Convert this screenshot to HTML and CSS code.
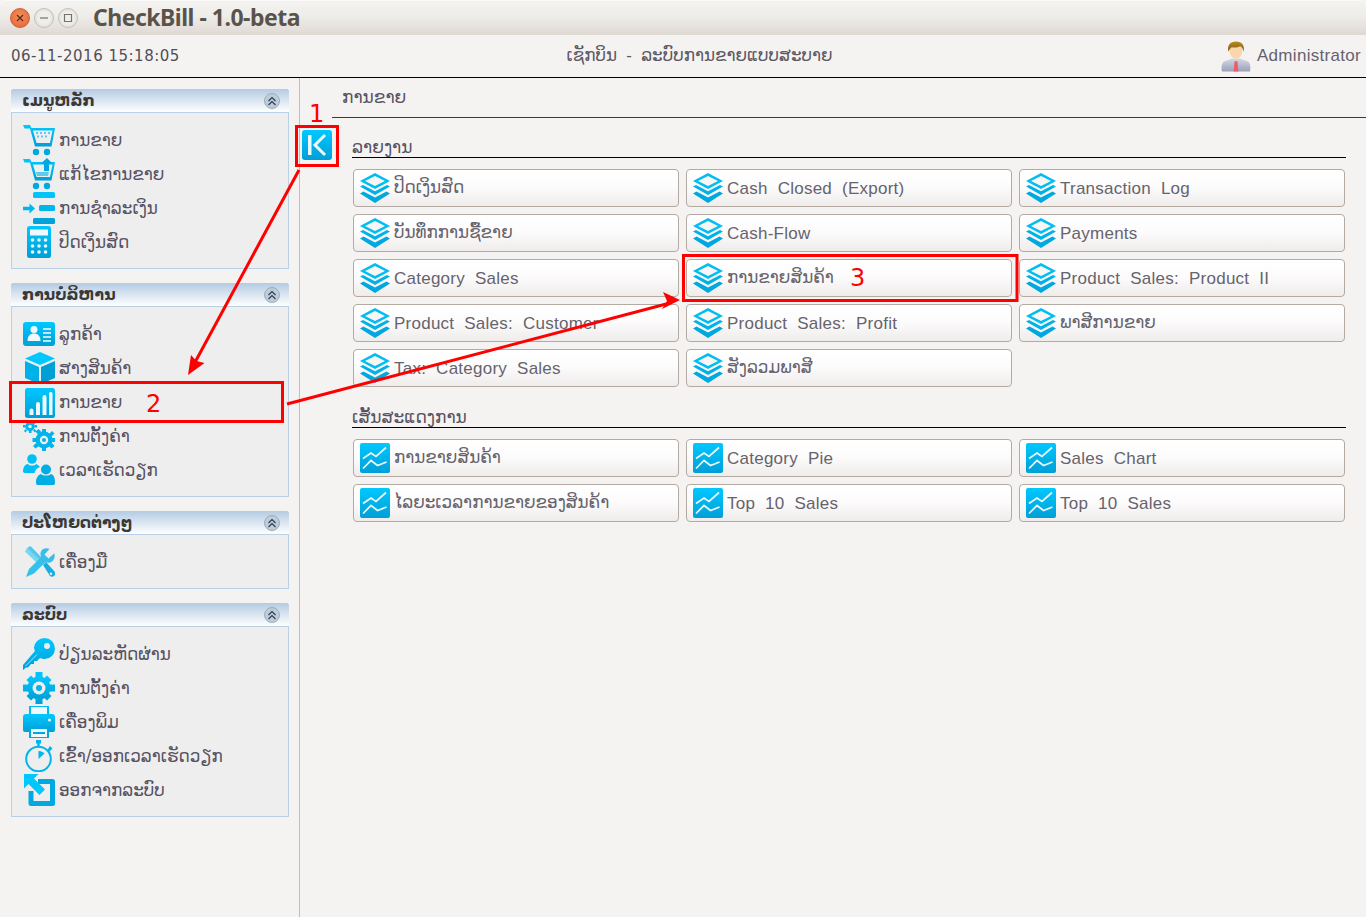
FILE: index.html
```html
<!DOCTYPE html>
<html lang="lo">
<head>
<meta charset="utf-8">
<title>CheckBill - 1.0-beta</title>
<link rel="stylesheet" href="styles.css">
</head>
<body>
<svg class="defs" width="0" height="0" aria-hidden="true">
  <defs>
    <linearGradient id="g" x1="0" y1="0" x2="0" y2="1"><stop offset="0" stop-color="#00c8ff"/><stop offset="1" stop-color="#009fd6"/></linearGradient>
    <linearGradient id="suit" x1="0" y1="0" x2="0" y2="1"><stop offset="0" stop-color="#d5d9e6"/><stop offset="1" stop-color="#9aa1ba"/></linearGradient>
    <linearGradient id="hair" x1="0" y1="0" x2="0" y2="1"><stop offset="0" stop-color="#b98a1e"/><stop offset="1" stop-color="#7d5a14"/></linearGradient>
    <symbol id="i-chev" viewBox="0 0 16 16">
      <circle cx="8" cy="8" r="7.500" fill="#b8cde0" stroke="#a9a9a9"/>
      <path d="M4.500 8L8 4.500 11.500 8M4.500 12L8 8.500 11.500 12" fill="none" stroke="#33363c" stroke-width="1.100"/>
    </symbol>
    <symbol id="i-cart" viewBox="0 0 32 32">
      <path d="M0 1h7l1.500 3h23.500l-3.500 18.500H12L7 4.500H1.500z" fill="url(#g)"/>
      <path d="M10 6.500h19.500l-2.500 12.500H13.500z" fill="#eeeeee"/>
      <path d="M13 8h2v2h-2zm4 0h2v2h-2zm4 0h2v2h-2zm4 0h2v2h-2zM14 11.500h2v2h-2zm4 0h2v2h-2zm4 0h2v2h-2z" fill="#5ecbee"/>
      <circle cx="13" cy="28" r="3.200" fill="#00a8e0"/><circle cx="24" cy="28" r="3.200" fill="#00a8e0"/>
    </symbol>
    <symbol id="i-cartedit" viewBox="0 0 32 32">
      <path d="M0 1h7l1.500 3h23.500l-3.500 18.500H12L7 4.500H1.500z" fill="url(#g)"/>
      <path d="M10 6.500h19.500l-2.500 12.500H13.500z" fill="#eeeeee"/>
      <path d="M13 14h13l-1 4H14z" fill="#5ecbee"/>
      <path d="M24 0l5.500 5.500H26V13h-5V5.500h-3z" fill="#00a8e0"/>
      <circle cx="13" cy="28" r="3.200" fill="#00a8e0"/><circle cx="24" cy="28" r="3.200" fill="#00a8e0"/>
    </symbol>
    <symbol id="i-pay" viewBox="0 0 32 32">
      <rect x="10" y="0" width="22" height="6" rx="1.500" fill="#00c4fa"/>
      <rect x="16" y="13" width="16" height="6" rx="1.500" fill="#00b6ec"/>
      <rect x="10" y="26" width="22" height="6" rx="1.500" fill="#00a2d8"/>
      <path d="M0 14.800h6.500v-3.300l5.500 5-5.500 5v-3.300H0z" fill="#00b6ec"/>
    </symbol>
    <symbol id="i-calc" viewBox="0 0 32 32">
      <rect x="4" y="0" width="24" height="32" rx="2.500" fill="url(#g)"/>
      <rect x="7" y="3.500" width="18" height="6" fill="#eef9fd"/>
      <g fill="#eef9fd"><circle cx="9.500" cy="14" r="1.800"/><circle cx="16" cy="14" r="1.800"/><circle cx="22.500" cy="14" r="1.800"/><circle cx="9.500" cy="20" r="1.800"/><circle cx="16" cy="20" r="1.800"/><circle cx="22.500" cy="20" r="1.800"/><circle cx="9.500" cy="26" r="1.800"/><circle cx="16" cy="26" r="1.800"/><circle cx="22.500" cy="26" r="1.800"/></g>
    </symbol>
    <symbol id="i-card" viewBox="0 0 32 32">
      <rect x="0" y="4" width="32" height="24" rx="3" fill="url(#g)"/>
      <circle cx="11" cy="11.500" r="3.500" fill="#eef9fd"/>
      <path d="M4.500 23c0-5 2.500-7.500 6.500-7.500s6.500 2.500 6.500 7.500z" fill="#eef9fd"/>
      <path d="M20 10h8v2h-8zm0 4h8v2h-8zm0 4h8v2h-8zm0 4h8v2h-8z" fill="#bdeafa"/>
    </symbol>
    <symbol id="i-box" viewBox="0 0 32 32">
      <path d="M17 0l15 6.500-15 6.500L2 6.500z" fill="#00c8ff"/>
      <path d="M2 9l14 6v17L2 26z" fill="#00b0e8"/>
      <path d="M32 9l-14 6v17l14-6z" fill="#009fd6"/>
    </symbol>
    <symbol id="i-chart" viewBox="0 0 32 32">
      <rect x="2" y="2" width="30" height="30" rx="2.500" fill="url(#g)"/>
      <path d="M6.500 24.500a2 2 0 0 1 4 0V29h-4zM13 18a2 2 0 0 1 4 0v11h-4zM19.500 11a2 2 0 0 1 4 0v18h-4zM26 7.500a1.800 1.800 0 0 1 3.500 0V29H26z" fill="#eef9fd"/>
    </symbol>
    <symbol id="i-gears" viewBox="0 0 32 32">
      <g fill="#00b4ec">
        <circle cx="21" cy="20" r="8.500"/>
        <path d="M19 9h4v4h-4zM19 27h4v4h-4zM9.500 18h4v4h-4zM28.500 18h3.500v4h-3.500z"/>
        <path d="M12.500 11.500l3-2.500 3 3-3 3zM26 26l3-3 2.500 3-3 2.500zM12.500 28.500l-2.500-2.500 3-3 3 3zM26 14l3-3 2.500 2.500-3 3z"/>
        <circle cx="7" cy="6.500" r="4.700"/>
        <path d="M6 0h2.500v2.500H6zM6 10.500h2.500V13H6zM0 5h2.500v2.500H0zM11.500 5H14v2.500h-2.500zM1.500 1l2-1 1.500 2-1.500 1.500zM10 10.500l1.500-1.500 2 2-1.500 1.500zM1 11l1.500-2 1.500 1.500-1.500 2zM9.500 2.500L11.500 1l1.500 1.500L11 4.500z"/>
      </g>
      <circle cx="21" cy="20" r="4.200" fill="#eeeeee"/>
      <circle cx="21" cy="20" r="2" fill="#00b4ec"/>
      <circle cx="7" cy="6.500" r="1.800" fill="#eeeeee"/>
    </symbol>
    <symbol id="i-users" viewBox="0 0 32 32">
      <circle cx="9" cy="5" r="4.800" fill="#00bff5"/>
      <path d="M0 18c0-6 3-8 5-8 1 2 7 2 8 0 1.500.5 3 1.500 4 3-3 1-5 3-5.500 6H3a3 3 0 0 1-3-1z" fill="#00bff5"/>
      <circle cx="23" cy="15.500" r="5" fill="#00aee6"/>
      <path d="M14 31c-1-1-1-2-1-3 0-4 2-7 5-8 2 2 8 2 10 0 3 1 4 4 4 8 0 1 0 2-1 3z" fill="#00aee6"/>
    </symbol>
    <symbol id="i-tools" viewBox="0 0 32 32">
      <path d="M4 2l3.500-2 12.500 13-3 3z" fill="#55c8ea"/>
      <path d="M4 2L2 5.500l12 11.500 3-3z" fill="#79d6f1"/>
      <path d="M31 7.500l-5.500 5-4-4 5-5.500c-3-1.500-7-.5-8.500 2.500-1 2-.5 4 .2 5.500L6 23 3 31l8-3.500 11.500-11.500c2 1 4.500 1 6.500-.5 2.500-2 3.500-5.500 2-8.500z" fill="#36bfe9"/>
      <path d="M20 19l3-3 8.500 9.500c1 1.500 1 3-.2 4.300-1.300 1.200-3 1.200-4.300.2z" fill="#18aee0"/>
      <circle cx="28" cy="27.700" r="1.200" fill="#eeeeee"/>
    </symbol>
    <symbol id="i-key" viewBox="0 0 32 32">
      <path d="M21.500 0a10.500 10.500 0 0 1 0 21c-1.500 0-3-.3-4.500-1l-3 3h-3v3H8l-3 3.500H3L0 32v-5l12-14c-.5-1-1-2.500-1-3.500A10.500 10.500 0 0 1 21.500 0z" fill="url(#g)"/>
      <circle cx="24" cy="8" r="3" fill="#eeeeee"/>
      <path d="M2.500 28L14 16.500" stroke="#9fe4f8" stroke-width="1" fill="none"/>
    </symbol>
    <symbol id="i-gear" viewBox="0 0 32 32">
      <g fill="url(#g)">
        <circle cx="16" cy="16" r="11.500"/>
        <path d="M12.500 0h7v6h-7zM12.500 26h7v6h-7zM0 12.500h6v7H0zM26 12.500h6v7h-6z"/>
        <path d="M3.500 8l4.500-4.500 4.500 4.500L8 12.500zM19.500 8L24 3.500 28.500 8 24 12.500zM3.500 24L8 19.500l4.500 4.500L8 28.500zM19.500 24L24 19.500l4.500 4.500L24 28.500z"/>
      </g>
      <circle cx="16" cy="16" r="6.500" fill="#eeeeee"/>
      <circle cx="16" cy="16" r="3" fill="#00b4ec"/>
    </symbol>
    <symbol id="i-print" viewBox="0 0 32 32">
      <rect x="7" y="0" width="18" height="12" fill="#eef9fd" stroke="#00bdf2" stroke-width="2"/>
      <path d="M3 8h26a3 3 0 0 1 3 3v13a2 2 0 0 1-2 2h-5v-5H7v5H2a2 2 0 0 1-2-2V11a3 3 0 0 1 3-3z" fill="url(#g)"/>
      <circle cx="26.500" cy="14" r="1.500" fill="#eef9fd"/>
      <rect x="7" y="22" width="18" height="10" fill="#eef9fd" stroke="#00a8e0" stroke-width="2"/>
      <path d="M10 26h12v2H10z" fill="#00a8e0"/>
    </symbol>
    <symbol id="i-clock" viewBox="0 0 32 32">
      <circle cx="15.500" cy="19" r="12.300" fill="none" stroke="#00b4ec" stroke-width="2"/>
      <path d="M13 0h5v3.500h-1.300V6h-2.400V3.500H13z" fill="#00b4ec"/>
      <path d="M27 6l2.500 2.500-3.500 3.500-1.800-1.800z" fill="#00b4ec"/>
      <path d="M15.500 11v8l6-5.500c-1.500-1.500-3.500-2.500-6-2.500z" fill="#00b4ec"/>
    </symbol>
    <symbol id="i-exit" viewBox="0 0 32 32">
      <path d="M15 5h14.500a2.500 2.500 0 0 1 2.500 2.500V29.500a2.500 2.500 0 0 1-2.500 2.500H8a2.500 2.500 0 0 1-2.500-2.500V17h5v10h16.500V10H15z" fill="#00a9e2"/>
      <path d="M1 0h14.500l-4.500 4.500 11 11-5.500 5.500-11-11L1 14.500z" fill="#00c8ff"/>
    </symbol>
    <symbol id="i-layers" viewBox="0 0 30 30">
      <path d="M15 0l15 8-15 8L0 8z" fill="#00bdf2"/>
      <path d="M15 3l10 5-10 5L5 8z" fill="#f7f6f4"/>
      <path d="M0 13.500l3-1.500 12 6.300L27 12l3 1.500-15 8.500z" fill="#00b2e8"/>
      <path d="M0 20.500l3.500-2 11.500 6 11.500-6 3.500 2L15 30z" fill="#00a8e0"/>
    </symbol>
    <symbol id="i-line" viewBox="0 0 30 30">
      <rect x="0" y="0" width="30" height="30" rx="2" fill="url(#g)"/>
      <path d="M3 15.500l8-5.500 5 3.500 10-9" fill="none" stroke="#eef9fd" stroke-width="1.700"/>
      <path d="M3 25.500l8-8 6.500 5 9-3.500" fill="none" stroke="#eef9fd" stroke-width="1.700"/>
    </symbol>
  </defs>
</svg>

<div class="window">
  <div class="titlebar">
    <div class="winbtns">
      <span class="winbtn close"><svg viewBox="0 0 10 10"><path d="M2 2l6 6M8 2l-6 6" stroke="#5b2a18" stroke-width="1.300"/></svg></span>
      <span class="winbtn"><svg viewBox="0 0 10 10"><path d="M1 5h8" stroke="#77726c" stroke-width="1.200"/></svg></span>
      <span class="winbtn"><svg viewBox="0 0 10 10"><path d="M1.500 1.500h7v7h-7z" fill="none" stroke="#77726c" stroke-width="1.200"/></svg></span>
    </div>
    <div class="wintitle">CheckBill - 1.0-beta</div>
  </div>

  <header class="topbar">
    <div class="clock">06-11-2016 15:18:05</div>
    <div class="apptitle">ເຊັກບິນ&nbsp; -&nbsp; ລະບົບການຂາຍແບບສະບາຍ</div>
    <div class="user">
      <svg class="avatar" viewBox="0 0 32 32">
        <path d="M1 32c-1-6 0-10 3-11l8-3h8l8 3c3 1 4 5 3 11z" fill="url(#suit)"/>
        <path d="M14.500 21h3l1 11h-5z" fill="#ee5a68"/>
        <ellipse cx="16" cy="10" rx="6.800" ry="8.500" fill="#fad6ac"/>
        <path d="M8 11C6 4 10 0 16 0s10 4 8 11c-.5-3-1.500-5-3.500-6-2 1.500-8 1.500-9 1-1.500 1-3 3-3.500 5z" fill="url(#hair)"/>
      </svg>
      <span class="username">Administrator</span>
    </div>
  </header>

  <div class="body">
    <aside class="sidebar">
      <section class="panel">
        <div class="panelhead"><h2>ເມນູຫລັກ</h2><svg class="chev"><use href="#i-chev"/></svg></div>
        <ul class="items">
          <li><svg class="mi"><use href="#i-cart"/></svg>ການຂາຍ</li>
          <li><svg class="mi"><use href="#i-cartedit"/></svg>ແກ້ໄຂການຂາຍ</li>
          <li><svg class="mi"><use href="#i-pay"/></svg>ການຊຳລະເງິນ</li>
          <li><svg class="mi"><use href="#i-calc"/></svg>ປິດເງິນສົດ</li>
        </ul>
      </section>
      <section class="panel">
        <div class="panelhead"><h2>ການບໍລິຫານ</h2><svg class="chev"><use href="#i-chev"/></svg></div>
        <ul class="items">
          <li><svg class="mi"><use href="#i-card"/></svg>ລູກຄ້າ</li>
          <li><svg class="mi"><use href="#i-box"/></svg>ສາງສິນຄ້າ</li>
          <li><svg class="mi"><use href="#i-chart"/></svg>ການຂາຍ</li>
          <li><svg class="mi"><use href="#i-gears"/></svg>ການຕັ້ງຄ່າ</li>
          <li><svg class="mi"><use href="#i-users"/></svg>ເວລາເຮັດວຽກ</li>
        </ul>
      </section>
      <section class="panel">
        <div class="panelhead"><h2>ປະໂຫຍດຕ່າງໆ</h2><svg class="chev"><use href="#i-chev"/></svg></div>
        <ul class="items">
          <li><svg class="mi"><use href="#i-tools"/></svg>ເຄື່ອງມື</li>
        </ul>
      </section>
      <section class="panel">
        <div class="panelhead"><h2>ລະບົບ</h2><svg class="chev"><use href="#i-chev"/></svg></div>
        <ul class="items">
          <li><svg class="mi"><use href="#i-key"/></svg>ປ່ຽນລະຫັດຜ່ານ</li>
          <li><svg class="mi"><use href="#i-gear"/></svg>ການຕັ້ງຄ່າ</li>
          <li><svg class="mi"><use href="#i-print"/></svg>ເຄື່ອງພິມ</li>
          <li><svg class="mi"><use href="#i-clock"/></svg>ເຂົ້າ/ອອກເວລາເຮັດວຽກ</li>
          <li><svg class="mi"><use href="#i-exit"/></svg>ອອກຈາກລະບົບ</li>
        </ul>
      </section>
    </aside>

    <main class="main">
      <div class="tabhead">ການຂາຍ</div>
      <button class="collapse" type="button" aria-label="collapse">
        <svg viewBox="0 0 30 30"><rect width="30" height="30" rx="3" fill="url(#g)"/><path d="M6 5h3.500v20H6z" fill="#eef9fd"/><path d="M23 5L13 15l10 10" fill="none" stroke="#eef9fd" stroke-width="3"/></svg>
      </button>
      <div class="content">
        <h3 class="sect first">ລາຍງານ</h3>
        <div class="btngrid">
          <a class="btn la"><svg class="bi"><use href="#i-layers"/></svg>ປິດເງິນສົດ</a>
          <a class="btn"><svg class="bi"><use href="#i-layers"/></svg>Cash&nbsp; Closed&nbsp; (Export)</a>
          <a class="btn"><svg class="bi"><use href="#i-layers"/></svg>Transaction&nbsp; Log</a>
          <a class="btn la"><svg class="bi"><use href="#i-layers"/></svg>ບັນທຶກການຊື້ຂາຍ</a>
          <a class="btn"><svg class="bi"><use href="#i-layers"/></svg>Cash-Flow</a>
          <a class="btn"><svg class="bi"><use href="#i-layers"/></svg>Payments</a>
          <a class="btn"><svg class="bi"><use href="#i-layers"/></svg>Category&nbsp; Sales</a>
          <a class="btn la"><svg class="bi"><use href="#i-layers"/></svg>ການຂາຍສິນຄ້າ</a>
          <a class="btn"><svg class="bi"><use href="#i-layers"/></svg>Product&nbsp; Sales:&nbsp; Product&nbsp; II</a>
          <a class="btn"><svg class="bi"><use href="#i-layers"/></svg>Product&nbsp; Sales:&nbsp; Customer</a>
          <a class="btn"><svg class="bi"><use href="#i-layers"/></svg>Product&nbsp; Sales:&nbsp; Profit</a>
          <a class="btn la"><svg class="bi"><use href="#i-layers"/></svg>ພາສີການຂາຍ</a>
          <a class="btn"><svg class="bi"><use href="#i-layers"/></svg>Tax:&nbsp; Category&nbsp; Sales</a>
          <a class="btn la"><svg class="bi"><use href="#i-layers"/></svg>ສັງລວມພາສີ</a>
        </div>
        <h3 class="sect">ເສັ້ນສະແດງການ</h3>
        <div class="btngrid">
          <a class="btn la"><svg class="bi"><use href="#i-line"/></svg>ການຂາຍສິນຄ້າ</a>
          <a class="btn"><svg class="bi"><use href="#i-line"/></svg>Category&nbsp; Pie</a>
          <a class="btn"><svg class="bi"><use href="#i-line"/></svg>Sales&nbsp; Chart</a>
          <a class="btn la"><svg class="bi"><use href="#i-line"/></svg>ໄລຍະເວລາການຂາຍຂອງສິນຄ້າ</a>
          <a class="btn"><svg class="bi"><use href="#i-line"/></svg>Top&nbsp; 10&nbsp; Sales</a>
          <a class="btn"><svg class="bi"><use href="#i-line"/></svg>Top&nbsp; 10&nbsp; Sales</a>
        </div>
      </div>
    </main>
  </div>

  <svg class="annot" viewBox="0 0 1366 917" aria-hidden="true">
    <g fill="none" stroke="#f00" stroke-width="3">
      <rect x="296.500" y="126.500" width="41" height="39"/>
      <rect x="10.500" y="382.500" width="272" height="39"/>
      <rect x="683.500" y="255.500" width="333.500" height="45"/>
    </g>
    <g stroke="#f00" stroke-width="3" fill="#f00">
      <path d="M299 170L193 366" fill="none"/>
      <path d="M188 375l3-20 5.500 6 8 2z" stroke="none"/>
      <path d="M287 404L670 303" fill="none"/>
      <path d="M680 300l-17-8 4 9-5 8z" stroke="none"/>
    </g>
    <g class="num">
      <text x="309" y="122">1</text>
      <text x="146" y="412">2</text>
      <text x="850" y="286">3</text>
    </g>
  </svg>
</div>
</body>
</html>
```
FILE: styles.css
```css
* { box-sizing: border-box; }
html, body { margin: 0; padding: 0; height: 100%; }
body {
  font-family: "Liberation Sans", "DejaVu Sans", sans-serif;
  background: #f5f3f1;
  color: #4d4b55;
}
.defs { position: absolute; }
.window {
  position: relative;
  width: 1366px;
  height: 917px;
  display: flex;
  flex-direction: column;
  background: #f5f3f1;
  overflow: hidden;
}
.titlebar {
  height: 35px;
  flex: none;
  display: flex;
  align-items: center;
  padding-left: 10px;
  background: linear-gradient(#f5f3f0, #efedea 45%, #dfd9d3);
  border-radius: 6px 6px 0 0;
  box-shadow: inset 0 1px 0 #fbfafa;
}
.winbtns { display: flex; align-items: center; gap: 4px; width: 83px; }
.winbtn {
  width: 20px;
  height: 20px;
  border-radius: 50%;
  display: flex;
  align-items: center;
  justify-content: center;
  background: radial-gradient(circle, #f0eeeb 45%, #d8d4ce);
  border: 1px solid #c4bfb9;
}
.winbtn svg { width: 10px; height: 10px; }
.winbtn.close {
  background: radial-gradient(circle at 50% 40%, #f0915f, #e9602f);
  border-color: #c9623a;
}
.wintitle {
  font: bold 23px/1 "Noto Sans", sans-serif;
  letter-spacing: -0.5px;
  color: #5a534b;
}
.topbar {
  height: 43px;
  flex: none;
  display: grid;
  grid-template-columns: 1fr auto 1fr;
  align-items: center;
  padding: 0 5px 0 11px;
  background: #f5f3f1;
  border-bottom: 1px solid #000;
}
.clock {
  font: 15px/1 "DejaVu Sans", sans-serif;
  letter-spacing: 0.5px;
  color: #524e58;
}
.apptitle {
  margin-left: 27px;
  font: 16.8px/1.2 "Liberation Sans", "DejaVu Sans", sans-serif;
  color: #5c5862;
  white-space: nowrap;
}
.user { display: flex; align-items: center; justify-content: flex-end; gap: 6px; }
.avatar { width: 30px; height: 33px; }
.username { font-size: 17px; letter-spacing: 0.3px; color: #656270; }
.body { flex: 1; display: flex; min-height: 0; }
.sidebar {
  width: 300px;
  flex: none;
  display: flex;
  flex-direction: column;
  gap: 14px;
  padding: 11px 10px 0 11px;
  border-right: 1px solid #c5bcb6;
}
.panel {
  width: 278px;
  background: #eeeeee;
  border: 1px solid #b9d0e6;
  border-top: 0;
  border-radius: 3px 3px 0 0;
}
.panelhead {
  height: 24px;
  margin: 0 -1px;
  padding: 0 9px 0 11px;
  display: flex;
  align-items: center;
  justify-content: space-between;
  background: linear-gradient(#b4cbe3, #ffffff);
  border-bottom: 1px solid #b9d0e6;
  border-radius: 3px 3px 0 0;
}
.panelhead h2 {
  margin: 2px 0 0;
  font: bold 15.6px/1 "DejaVu Sans", sans-serif;
  color: #3c3834;
  white-space: nowrap;
}
.chev { width: 16px; height: 16px; flex: none; }
.items {
  list-style: none;
  margin: 0;
  padding: 10px 0 9px 11px;
}
.items li {
  height: 34px;
  display: flex;
  align-items: center;
  gap: 4px;
  font: 16.8px/1 "DejaVu Sans", sans-serif;
  color: #575262;
  white-space: nowrap;
}
.mi { width: 32px; height: 32px; flex: none; }
.main { flex: 1; position: relative; min-width: 0; }
.tabhead {
  margin-left: 32px;
  height: 40px;
  border-bottom: 1px solid #3a3a3a;
  padding: 9px 0 0 10px;
  font: 17px/1.2 "DejaVu Sans", sans-serif;
  color: #575262;
}
.collapse {
  position: absolute;
  left: 2px;
  top: 52px;
  width: 30px;
  height: 30px;
  padding: 0;
  border: 0;
  background: none;
}
.collapse svg { display: block; width: 30px; height: 30px; }
.content { padding: 0 20px 0 52px; }
.sect {
  margin: 0 0 11px;
  height: 41px;
  display: flex;
  align-items: flex-end;
  font: 17px/1.2 "DejaVu Sans", sans-serif;
  font-weight: normal;
  color: #575262;
  border-bottom: 1px solid #000;
}
.sect.first { height: 40px; }
.btngrid {
  margin-left: 1px;
  margin-right: 1px;
  display: grid;
  grid-template-columns: repeat(3, 326px);
  grid-auto-rows: 38px;
  gap: 7px;
}
.btn {
  display: flex;
  align-items: center;
  gap: 4px;
  padding-left: 6px;
  border: 1px solid #b5aaa2;
  border-radius: 4px;
  background: linear-gradient(#ffffff, #fdfcfc 45%, #efeceb);
  font: 17px/1 "Liberation Sans", "DejaVu Sans", sans-serif;
  letter-spacing: 0.25px;
  color: #66636d;
  white-space: nowrap;
  overflow: hidden;
}
.btn.la { letter-spacing: 0; font-size: 16.8px; }
.bi { width: 30px; height: 30px; flex: none; }
.annot {
  position: absolute;
  left: 0;
  top: 0;
  width: 1366px;
  height: 917px;
  pointer-events: none;
}
.num text {
  font: 24px "DejaVu Sans", sans-serif;
  fill: #f00;
  stroke: none;
}
```
